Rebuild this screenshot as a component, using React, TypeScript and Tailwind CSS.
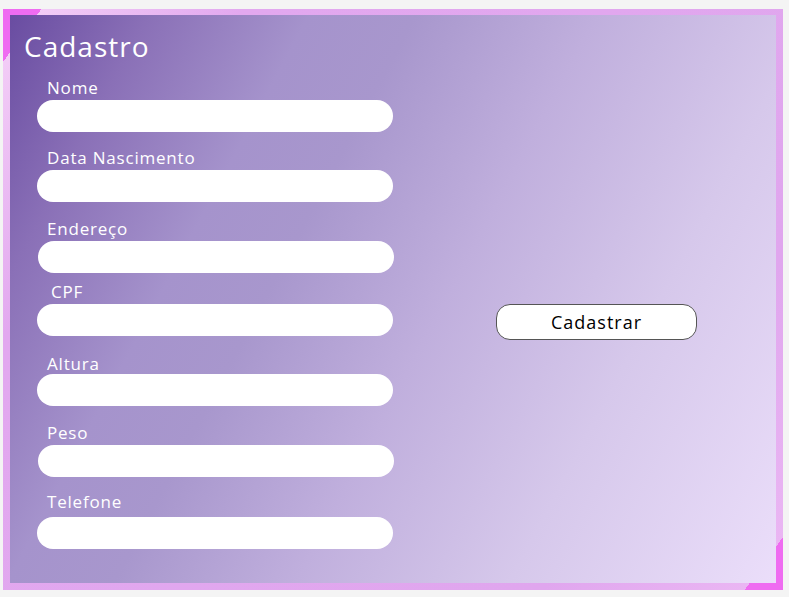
const campos = [
  { label: 'Nome', labelPad: 'pl-[10px]', mt: 'mt-0', inputX: 'ml-0' },
  { label: 'Data Nascimento', labelPad: 'pl-[10px]', mt: 'mt-[16px]', inputX: 'ml-0' },
  { label: 'Endereço', labelPad: 'pl-[10px]', mt: 'mt-[17px]', inputX: 'ml-[1px]' },
  { label: 'CPF', labelPad: 'pl-[14px]', mt: 'mt-[9px]', inputX: 'ml-0' },
  { label: 'Altura', labelPad: 'pl-[10px]', mt: 'mt-[18px]', inputX: 'ml-0' },
  { label: 'Peso', labelPad: 'pl-[10px]', mt: 'mt-[17px]', inputX: 'ml-[1px]' },
  { label: 'Telefone', labelPad: 'pl-[10px]', mt: 'mt-[15px]', inputX: 'ml-0' },
]

function Campo({ c, gap }: { c: typeof campos[0]; gap: string }) {
  return (
    <div className={c.mt}>
      <label className={`block h-[20px] leading-[20px] text-[17px] tracking-[0.8px] text-white ${c.labelPad}`}>
        {c.label}
      </label>
      <input
        type="text"
        className={`block h-[32px] w-[356px] rounded-full bg-white outline-none ${gap} ${c.inputX}`}
      />
    </div>
  )
}

export default function App() {
  return (
    <div className="min-h-[597px] w-[789px] bg-[#f4f4f4] pt-[9px] pl-[3px] font-['Open_Sans',sans-serif]">
      <div className="h-[581px] w-[780px] bg-[linear-gradient(126deg,#ef6cf1_3.2%,#f2ccf6_3.2%,#e2a8ef_20%,#e0a6ee_80%,#eab6f3_96.8%,#ef6cf1_96.8%)] pt-[6px] pb-[7px] pl-[7px] pr-[7px]">
        <div className="flex h-full w-full bg-[linear-gradient(118deg,#694ca1_0%,#8a70b7_13%,#a593cc_28%,#a897cd_38%,#c0afdd_55%,#d6c8eb_75%,#ebdefa_100%)]">
          <div className="w-[384px] shrink-0 pl-[14px] pt-[15px]">
            <h1 className="text-[28px] leading-[32px] tracking-[1px] text-white">Cadastro</h1>
            <div className="pl-[13px] pt-[16px]">
              {campos.map((c, i) => (
                <Campo key={i} c={c} gap={i === 6 ? 'mt-[5px]' : i === 4 ? 'mt-0' : 'mt-[2px]'} />
              ))}
            </div>
          </div>
          <div className="flex-1 pl-[102px] pt-[289px]">
            <button className="h-[36px] w-[201px] rounded-[14px] border border-[#555] bg-white text-[18px] tracking-[1px] text-black">
              Cadastrar
            </button>
          </div>
        </div>
      </div>
    </div>
  )
}
